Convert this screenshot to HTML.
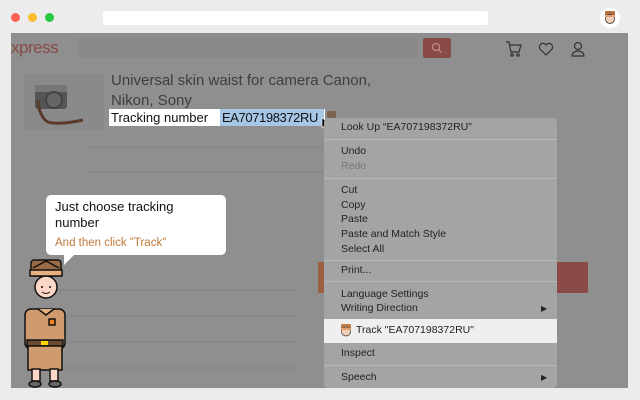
<!DOCTYPE html>
<html><head><meta charset="utf-8"><style>
*{margin:0;padding:0;box-sizing:border-box}
body{width:640px;height:400px;background:#ececec;position:relative;overflow:hidden;font-family:"Liberation Sans","DejaVu Sans",sans-serif}
.a{position:absolute}
.dot{width:9px;height:9px;border-radius:50%;top:13px}
#content{left:11px;top:33px;width:617px;height:355px;background:#8f8f8f}
.line{height:2px;background:#898989}
#menu{left:324px;top:118px;width:233px;height:270px;background:#a3a5a5;border-radius:4px;font-size:10.5px;color:#222}
.mi{position:absolute;left:17px}
.sep{position:absolute;left:0;width:233px;height:1px;background:#b6b8b8}
</style></head><body>
<div class="a dot" style="left:11px;background:#fd5e57"></div>
<div class="a dot" style="left:28px;background:#fdbc2e"></div>
<div class="a dot" style="left:45px;background:#27c73f"></div>
<div class="a" style="left:103px;top:11px;width:385px;height:14px;background:#fff;border-radius:2px"></div>
<div class="a" style="left:600px;top:8px;width:20px;height:20px;border-radius:50%;background:#fff"></div>
<svg class="a" style="left:604px;top:10px" width="12" height="16" viewBox="0 0 12 16"><rect x="1" y="1" width="10" height="5" rx="1" fill="#b07040"/><circle cx="6" cy="9" r="4.5" fill="#f5d0b8" stroke="#333" stroke-width=".8"/><rect x="1" y="5" width="10" height="2" fill="#e0a070"/></svg>
<div class="a" id="content"></div>
<div class="a" style="left:11px;top:38px;font-size:17px;color:#8a4a45;letter-spacing:-.5px">xpress</div>
<div class="a" style="left:78px;top:38px;width:340px;height:20px;background:#8a8a8a"></div>
<div class="a" style="left:423px;top:38px;width:28px;height:20px;background:#8a4a45;border-radius:2px"></div>
<svg class="a" style="left:430px;top:41px" width="14" height="14"><circle cx="6" cy="6" r="3.5" fill="none" stroke="#c99" stroke-width="1"/><path d="M8.5 8.5l3 3" stroke="#c99"/></svg>
<svg class="a" style="left:505px;top:40px" width="85" height="18" fill="none" stroke="#333" stroke-width="1.2"><path d="M1 2h3l2 10h8l2-7H5"/><circle cx="7" cy="15" r="1.2"/><circle cx="13" cy="15" r="1.2"/><path d="M41 15l-6-6a3.5 3.5 0 0 1 6-4a3.5 3.5 0 0 1 6 4z"/><circle cx="73" cy="6" r="3.5"/><path d="M67 16a6 5 0 0 1 12 0z"/></svg>
<div class="a" style="left:24px;top:74px;width:80px;height:56px;background:#8a8a8a"></div>
<svg class="a" style="left:30px;top:80px" width="60" height="50"><rect x="5" y="5" width="32" height="24" rx="3" fill="#555"/><rect x="5" y="5" width="32" height="7" fill="#777"/><circle cx="24" cy="20" r="8" fill="#666" stroke="#444" stroke-width="2"/><path d="M8 20c0 10 5 20 10 22 10 3 25 0 35-2" fill="none" stroke="#5a3a2a" stroke-width="3"/></svg>
<div class="a" style="left:111px;top:71px;font-size:15px;color:#3e3e3e;line-height:20px">Universal skin waist for camera Canon,<br>Nikon, Sony</div>
<div class="a" style="left:109px;top:109px;height:17px;width:216px;background:#fff"></div>
<div class="a" style="left:111px;top:109px;font-size:13px;line-height:17px;color:#111">Tracking number</div>
<div class="a" style="left:220px;top:109px;width:104px;height:17px;background:#a7c7e7"></div>
<div class="a" style="left:222px;top:109px;font-size:13px;line-height:17px;color:#111;letter-spacing:-.4px">EA707198372RU</div>
<div class="a" style="left:327px;top:111px;width:9px;height:7px;background:#7a6050;border-radius:2px"></div>
<svg class="a" style="left:321px;top:117px" width="10" height="14"><path d="M1 1v10l3-3 2 4 2-1-2-4h4z" fill="#000" stroke="#fff" stroke-width=".6"/></svg>
<div class="a line" style="left:88px;top:146px;width:236px"></div>
<div class="a line" style="left:88px;top:171px;width:236px"></div>
<div class="a line" style="left:30px;top:289px;width:266px"></div>
<div class="a line" style="left:30px;top:315px;width:266px"></div>
<div class="a line" style="left:30px;top:341px;width:266px"></div>
<div class="a line" style="left:30px;top:367px;width:266px"></div>
<div class="a" style="left:318px;top:262px;width:270px;height:31px;background:#8a4a45;border-radius:2px"></div>
<div class="a" style="left:318px;top:262px;width:6px;height:31px;background:#9a6040"></div>
<div class="a" style="left:46px;top:195px;width:180px;height:60px;background:#fff;border-radius:5px"></div>
<svg class="a" style="left:60px;top:253px" width="20" height="14"><path d="M4 0v12L16 0z" fill="#fff"/></svg>
<div class="a" style="left:55px;top:199px;font-size:13px;line-height:16px;color:#111">Just choose tracking<br>number</div>
<div class="a" style="left:55px;top:237px;font-size:11.5px;color:#c07a3a">And then click "Track"</div>
<svg class="a" style="left:20px;top:258px" width="50" height="130" viewBox="0 0 50 130" stroke="#111" stroke-width="1.5">
<rect x="11" y="2" width="30" height="16" rx="3" fill="#9a6a45"/>
<path d="M13 10l13-7 13 7" fill="none"/>
<circle cx="26" cy="29" r="11" fill="#fcd7c8"/>
<rect x="10" y="12" width="32" height="6" fill="#e8b080"/>
<circle cx="22" cy="29" r="1" fill="#111" stroke="none"/><circle cx="30" cy="29" r="1" fill="#111" stroke="none"/>
<path d="M22 34q4 3 8 0" fill="none" stroke-width="1"/>
<rect x="5" y="51" width="40" height="40" rx="6" fill="#d09a6f"/>
<path d="M18 51l8 6 8-6" fill="#e8b080"/>
<rect x="29" y="61" width="6" height="6" fill="#f08020"/>
<rect x="7" y="82" width="36" height="6" fill="#6a4a30"/>
<rect x="21" y="83" width="7" height="4" fill="#ffd800" stroke="none"/>
<rect x="8" y="88" width="34" height="24" fill="#d09a6f"/>
<rect x="12" y="111" width="8" height="12" fill="#fcd7c8"/>
<rect x="30" y="111" width="8" height="12" fill="#fcd7c8"/>
<ellipse cx="15" cy="126" rx="6" ry="3" fill="#666"/>
<ellipse cx="35" cy="126" rx="6" ry="3" fill="#666"/>
</svg>
<div class="a" id="menu">
<div class="mi" style="top:3px">Look Up “EA707198372RU”</div>
<div class="sep" style="top:21px"></div>
<div class="mi" style="top:27px">Undo</div>
<div class="mi" style="top:42px;color:#777">Redo</div>
<div class="sep" style="top:60px"></div>
<div class="mi" style="top:66px">Cut</div>
<div class="mi" style="top:81px">Copy</div>
<div class="mi" style="top:95px">Paste</div>
<div class="mi" style="top:110px">Paste and Match Style</div>
<div class="mi" style="top:125px">Select All</div>
<div class="sep" style="top:142px"></div>
<div class="mi" style="top:146px">Print...</div>
<div class="sep" style="top:163px"></div>
<div class="mi" style="top:170px">Language Settings</div>
<div class="mi" style="top:184px">Writing Direction</div>
<div class="mi" style="left:217px;top:184px;font-size:8px;line-height:14px">▶</div>
<div class="a" style="left:0;top:201px;width:233px;height:24px;background:#efefef"></div>
<svg class="a" style="left:16px;top:206px" width="12" height="13"><rect x="1" y="0" width="10" height="5" rx="1" fill="#c07a45"/><circle cx="6" cy="7.5" r="4.5" fill="#f5d0b8" stroke="#333" stroke-width=".7"/><rect x="1" y="4" width="10" height="2" fill="#e0a070"/></svg>
<div class="mi" style="left:32px;top:206px">Track "EA707198372RU"</div>
<div class="mi" style="top:229px">Inspect</div>
<div class="sep" style="top:247px"></div>
<div class="mi" style="top:253px">Speech</div>
<div class="mi" style="left:217px;top:253px;font-size:8px;line-height:14px">▶</div>
</div>
</body></html>
